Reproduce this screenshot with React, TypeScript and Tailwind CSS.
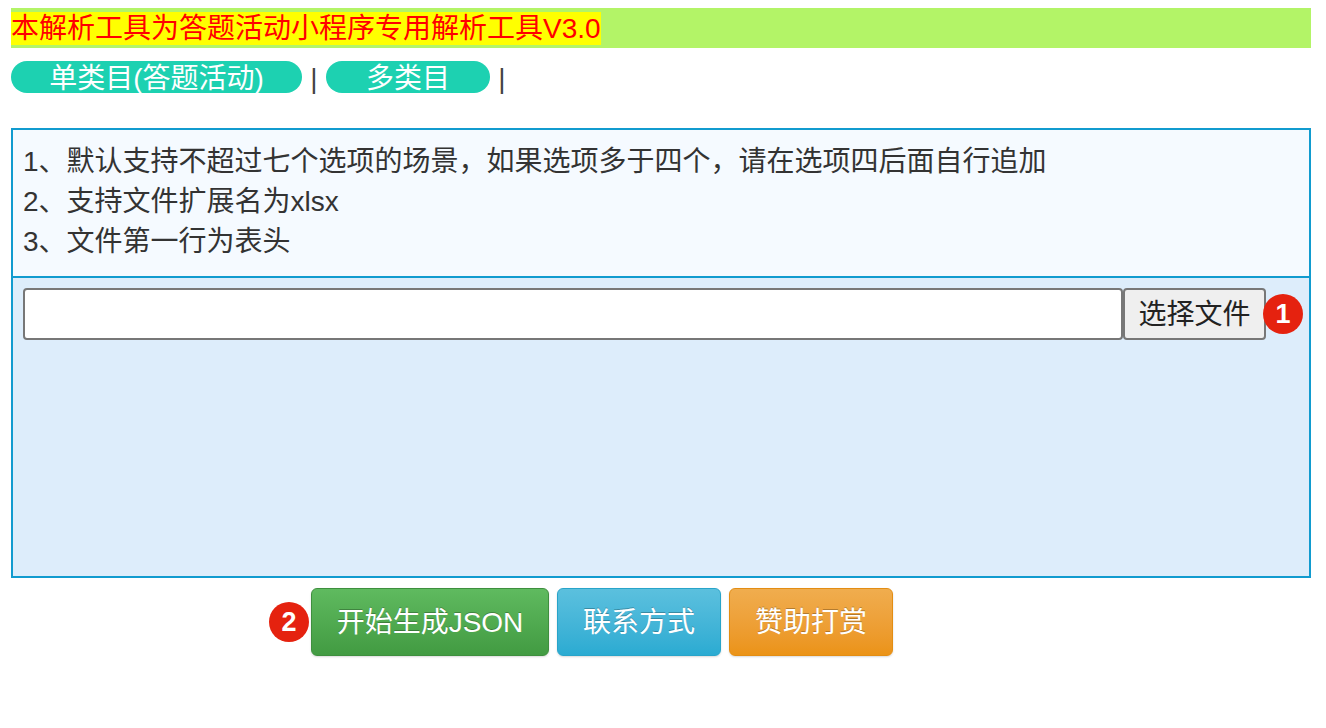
import React from 'react'

const font = { fontFamily: '"Liberation Sans", "Noto Sans CJK SC", sans-serif' }

function Badge({ n }: { n: number }) {
  return (
    <span className="w-10 h-10 shrink-0 rounded-full bg-[#e5220f] text-white text-[27px] font-bold flex items-center justify-center leading-none">
      {n}
    </span>
  )
}

export default function App() {
  return (
    <div className="min-h-screen bg-white pt-2 px-[11px] text-[#333]" style={font}>
      {/* title bar */}
      <div className="w-[1300px] h-10 bg-[#b3f467] flex items-center">
        <span className="bg-[#ffff00] text-[#ff0000] text-[28px] leading-[33px]">本解析工具为答题活动小程序专用解析工具V3.0</span>
      </div>

      {/* tabs */}
      <div className="flex items-center mt-[13px] h-8 text-[28px]">
        <button className="w-[291px] h-8 pt-[3px] rounded-full bg-[#1dd1b1] text-white text-[28px] leading-8 flex items-center justify-center">
          单类目(答题活动)
        </button>
        <span className="w-6 pt-[3px] text-center text-[#444] leading-8">|</span>
        <button className="w-[164px] h-8 pt-[3px] rounded-full bg-[#1dd1b1] text-white text-[28px] leading-8 flex items-center justify-center">
          多类目
        </button>
        <span className="w-6 pt-[3px] text-center text-[#444] leading-8">|</span>
      </div>

      {/* main panel */}
      <div className="mt-[35px] border-2 border-[#119bcf] w-[1300px]">
        <div className="bg-[#f5faff] pt-[12px] pb-[14px] px-[10px] text-[28px] leading-10 text-[#333] border-b-2 border-[#119bcf]">
          <p>1、默认支持不超过七个选项的场景，如果选项多于四个，请在选项四后面自行追加</p>
          <p>2、支持文件扩展名为xlsx</p>
          <p>3、文件第一行为表头</p>
        </div>
        <div className="bg-[#ddedfb] h-[298px] pt-[10px] px-[10px]">
          <div className="flex items-center">
            <input className="w-[1100px] shrink-0 h-[52px] bg-white border-2 border-[#777] rounded-[4px] outline-none" />
            <button className="w-[143px] shrink-0 h-[52px] pt-[2px] bg-[#efefef] border-2 border-[#777] rounded-[4px] text-[28px] text-[#222]">
              选择文件
            </button>
            <span className="-ml-[3px]"><Badge n={1} /></span>
          </div>
        </div>
      </div>

      {/* actions */}
      <div className="flex items-center mt-[10px] ml-[258px]">
        <Badge n={2} />
        <button className="ml-[2px] w-[238px] h-[68px] pt-[2px] rounded-[6px] border border-[#3e8f3e] bg-gradient-to-b from-[#5fba5f] to-[#429b42] text-white text-[28px] [text-shadow:0_-1px_0_rgba(0,0,0,0.25)] shadow-[0_1px_2px_rgba(0,0,0,0.15)]">
          开始生成JSON
        </button>
        <button className="ml-[8px] w-[164px] h-[68px] pt-[2px] rounded-[6px] border border-[#28a4c9] bg-gradient-to-b from-[#5bc0de] to-[#2aabd2] text-white text-[28px] [text-shadow:0_-1px_0_rgba(0,0,0,0.25)] shadow-[0_1px_2px_rgba(0,0,0,0.15)]">
          联系方式
        </button>
        <button className="ml-[8px] w-[164px] h-[68px] pt-[2px] rounded-[6px] border border-[#e38d13] bg-gradient-to-b from-[#f0ad4e] to-[#eb9316] text-white text-[28px] [text-shadow:0_-1px_0_rgba(0,0,0,0.25)] shadow-[0_1px_2px_rgba(0,0,0,0.15)]">
          赞助打赏
        </button>
      </div>
    </div>
  )
}
